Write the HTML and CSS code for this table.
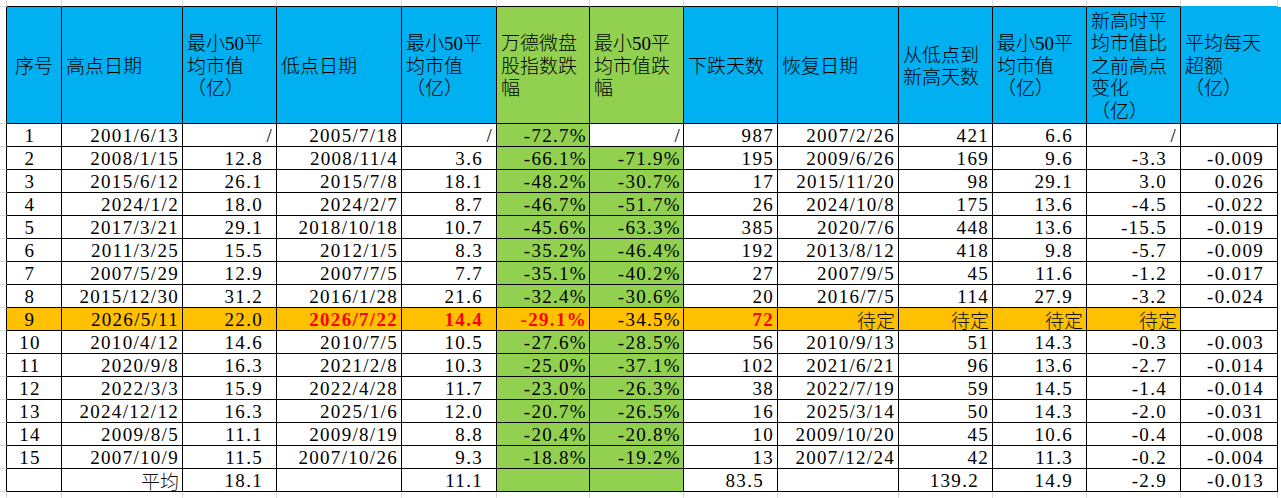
FILE: index.html
```html
<!DOCTYPE html>
<html lang="zh-CN">
<head>
<meta charset="utf-8">
<title>微盘股回撤统计</title>
<link rel="stylesheet" href="styles.css">
</head>
<body>
<div class="sheet">
  <!-- top gridline strip -->
  <div class="corner"></div>
  <div class="gt"></div><div class="gt"></div><div class="gt"></div><div class="gt"></div><div class="gt"></div><div class="gt"></div><div class="gt"></div><div class="gt"></div><div class="gt"></div><div class="gt"></div><div class="gt"></div><div class="gt"></div><div class="gt gt-open"></div>

  <!-- header -->
  <div class="gl"></div>
  <div class="h hc">序号</div>
  <div class="h">高点日期</div>
  <div class="h">最小50平均市值（亿）</div>
  <div class="h">低点日期</div>
  <div class="h">最小50平均市值（亿）</div>
  <div class="h hg">万德微盘股指数跌幅</div>
  <div class="h hg">最小50平均市值跌幅</div>
  <div class="h">下跌天数</div>
  <div class="h">恢复日期</div>
  <div class="h">从低点到新高天数</div>
  <div class="h">最小50平均市值（亿）</div>
  <div class="h">新高时平均市值比之前高点变化（亿）</div>
  <div class="h h-open">平均每天超额（亿）</div>
  <div class="hx"></div>

  <!-- row 1 -->
  <div class="gl"></div>
  <div class="c idx">1</div><div class="c">2001/6/13</div><div class="c">/</div><div class="c">2005/7/18</div><div class="c">/</div><div class="c pct gr">-72.7%</div><div class="c pct">/</div><div class="c">987</div><div class="c">2007/2/26</div><div class="c">421</div><div class="c dec">6.6</div><div class="c">/</div><div class="c"></div>
  <!-- row 2 -->
  <div class="gl"></div>
  <div class="c idx">2</div><div class="c">2008/1/15</div><div class="c dec">12.8</div><div class="c">2008/11/4</div><div class="c dec">3.6</div><div class="c pct gr">-66.1%</div><div class="c pct gr">-71.9%</div><div class="c">195</div><div class="c">2009/6/26</div><div class="c">169</div><div class="c dec">9.6</div><div class="c dec">-3.3</div><div class="c dec">-0.009</div>
  <!-- row 3 -->
  <div class="gl"></div>
  <div class="c idx">3</div><div class="c">2015/6/12</div><div class="c dec">26.1</div><div class="c">2015/7/8</div><div class="c dec">18.1</div><div class="c pct gr">-48.2%</div><div class="c pct gr">-30.7%</div><div class="c">17</div><div class="c">2015/11/20</div><div class="c">98</div><div class="c dec">29.1</div><div class="c dec">3.0</div><div class="c dec">0.026</div>
  <!-- row 4 -->
  <div class="gl"></div>
  <div class="c idx">4</div><div class="c">2024/1/2</div><div class="c dec">18.0</div><div class="c">2024/2/7</div><div class="c dec">8.7</div><div class="c pct gr">-46.7%</div><div class="c pct gr">-51.7%</div><div class="c">26</div><div class="c">2024/10/8</div><div class="c">175</div><div class="c dec">13.6</div><div class="c dec">-4.5</div><div class="c dec">-0.022</div>
  <!-- row 5 -->
  <div class="gl"></div>
  <div class="c idx">5</div><div class="c">2017/3/21</div><div class="c dec">29.1</div><div class="c">2018/10/18</div><div class="c dec">10.7</div><div class="c pct gr">-45.6%</div><div class="c pct gr">-63.3%</div><div class="c">385</div><div class="c">2020/7/6</div><div class="c">448</div><div class="c dec">13.6</div><div class="c dec">-15.5</div><div class="c dec">-0.019</div>
  <!-- row 6 -->
  <div class="gl"></div>
  <div class="c idx">6</div><div class="c">2011/3/25</div><div class="c dec">15.5</div><div class="c">2012/1/5</div><div class="c dec">8.3</div><div class="c pct gr">-35.2%</div><div class="c pct gr">-46.4%</div><div class="c">192</div><div class="c">2013/8/12</div><div class="c">418</div><div class="c dec">9.8</div><div class="c dec">-5.7</div><div class="c dec">-0.009</div>
  <!-- row 7 -->
  <div class="gl"></div>
  <div class="c idx">7</div><div class="c">2007/5/29</div><div class="c dec">12.9</div><div class="c">2007/7/5</div><div class="c dec">7.7</div><div class="c pct gr">-35.1%</div><div class="c pct gr">-40.2%</div><div class="c">27</div><div class="c">2007/9/5</div><div class="c">45</div><div class="c dec">11.6</div><div class="c dec">-1.2</div><div class="c dec">-0.017</div>
  <!-- row 8 -->
  <div class="gl"></div>
  <div class="c idx">8</div><div class="c">2015/12/30</div><div class="c dec">31.2</div><div class="c">2016/1/28</div><div class="c dec">21.6</div><div class="c pct gr">-32.4%</div><div class="c pct gr">-30.6%</div><div class="c">20</div><div class="c">2016/7/5</div><div class="c">114</div><div class="c dec">27.9</div><div class="c dec">-3.2</div><div class="c dec">-0.024</div>
  <!-- row 9 (current) -->
  <div class="gl"></div>
  <div class="c idx or">9</div><div class="c or">2026/5/11</div><div class="c dec or">22.0</div><div class="c or red">2026/7/22</div><div class="c dec or red">14.4</div><div class="c pct or red">-29.1%</div><div class="c pct or">-34.5%</div><div class="c or red">72</div><div class="c or"><span class="zh">待定</span></div><div class="c or"><span class="zh">待定</span></div><div class="c or"><span class="zh">待定</span></div><div class="c or"><span class="zh">待定</span></div><div class="c"></div>
  <!-- row 10 -->
  <div class="gl"></div>
  <div class="c idx">10</div><div class="c">2010/4/12</div><div class="c dec">14.6</div><div class="c">2010/7/5</div><div class="c dec">10.5</div><div class="c pct gr">-27.6%</div><div class="c pct gr">-28.5%</div><div class="c">56</div><div class="c">2010/9/13</div><div class="c">51</div><div class="c dec">14.3</div><div class="c dec">-0.3</div><div class="c dec">-0.003</div>
  <!-- row 11 -->
  <div class="gl"></div>
  <div class="c idx">11</div><div class="c">2020/9/8</div><div class="c dec">16.3</div><div class="c">2021/2/8</div><div class="c dec">10.3</div><div class="c pct gr">-25.0%</div><div class="c pct gr">-37.1%</div><div class="c">102</div><div class="c">2021/6/21</div><div class="c">96</div><div class="c dec">13.6</div><div class="c dec">-2.7</div><div class="c dec">-0.014</div>
  <!-- row 12 -->
  <div class="gl"></div>
  <div class="c idx">12</div><div class="c">2022/3/3</div><div class="c dec">15.9</div><div class="c">2022/4/28</div><div class="c dec">11.7</div><div class="c pct gr">-23.0%</div><div class="c pct gr">-26.3%</div><div class="c">38</div><div class="c">2022/7/19</div><div class="c">59</div><div class="c dec">14.5</div><div class="c dec">-1.4</div><div class="c dec">-0.014</div>
  <!-- row 13 -->
  <div class="gl"></div>
  <div class="c idx">13</div><div class="c">2024/12/12</div><div class="c dec">16.3</div><div class="c">2025/1/6</div><div class="c dec">12.0</div><div class="c pct gr">-20.7%</div><div class="c pct gr">-26.5%</div><div class="c">16</div><div class="c">2025/3/14</div><div class="c">50</div><div class="c dec">14.3</div><div class="c dec">-2.0</div><div class="c dec">-0.031</div>
  <!-- row 14 -->
  <div class="gl"></div>
  <div class="c idx">14</div><div class="c">2009/8/5</div><div class="c dec">11.1</div><div class="c">2009/8/19</div><div class="c dec">8.8</div><div class="c pct gr">-20.4%</div><div class="c pct gr">-20.8%</div><div class="c">10</div><div class="c">2009/10/20</div><div class="c">45</div><div class="c dec">10.6</div><div class="c dec">-0.4</div><div class="c dec">-0.008</div>
  <!-- row 15 -->
  <div class="gl"></div>
  <div class="c idx">15</div><div class="c">2007/10/9</div><div class="c dec">11.5</div><div class="c">2007/10/26</div><div class="c dec">9.3</div><div class="c pct gr">-18.8%</div><div class="c pct gr">-19.2%</div><div class="c">13</div><div class="c">2007/12/24</div><div class="c">42</div><div class="c dec">11.3</div><div class="c dec">-0.2</div><div class="c dec">-0.004</div>
  <!-- average row -->
  <div class="gl"></div>
  <div class="c idx"></div><div class="c"><span class="zh">平均</span></div><div class="c dec">18.1</div><div class="c"></div><div class="c dec">11.1</div><div class="c gr"></div><div class="c gr"></div><div class="c dec">83.5</div><div class="c"></div><div class="c dec">139.2</div><div class="c dec">14.9</div><div class="c dec">-2.9</div><div class="c dec">-0.013</div>

  <!-- bottom gridline strip -->
  <div class="gb gl-first"></div>
  <div class="gb"></div><div class="gb"></div><div class="gb"></div><div class="gb"></div><div class="gb"></div><div class="gb"></div><div class="gb"></div><div class="gb"></div><div class="gb"></div><div class="gb"></div><div class="gb"></div><div class="gb"></div><div class="gb"></div>
</div>
</body>
</html>
```

FILE: styles.css
```css
html, body {
  margin: 0;
  padding: 0;
  background: #ffffff;
  overflow: hidden;
}

.sheet {
  display: grid;
  grid-template-columns: 7px 55px 121px 94px 125px 95px 93px 94px 94px 121px 94px 94px 94px 97px 4px;
  grid-template-rows: 7px 117px repeat(16, 23px) 10px;
  width: max-content;
  font-family: "Liberation Serif", "Noto Sans CJK SC", serif;
  font-size: 19px;
  color: #000;
}

.sheet > div {
  box-sizing: border-box;
  min-width: 0;
}

/* faint spreadsheet gridlines outside the table */
.corner {
  grid-column: 1;
  border-right: 1px solid #dadada;
  border-bottom: 1px solid #dadada;
}
.gt {
  border-right: 1px solid #dadada;
  border-bottom: 1px solid #000;
}
.gt-open {
  border-bottom-color: #00b0f0;
}
.gl {
  grid-column: 1;
  border-right: 1px solid #000;
  border-bottom: 1px solid #dadada;
}
.gb {
  border-right: 1px solid #dadada;
}
.gl-first {
  grid-column: 1;
}

/* header cells */
.h {
  display: flex;
  flex-direction: column;
  justify-content: center;
  padding: 4px 2px 0 4px;
  background: #00b0f0;
  border-right: 1px solid #000;
  border-bottom: 1px solid #000;
  line-height: 22.5px;
  font-weight: 300;
  text-spacing-trim: space-all;
}
.hc {
  text-align: center;
  padding: 4px 0 0 0;
}
.hg {
  background: #92d050;
}
.h-open {
  border-right: none;
}
.hx {
  background: #00b0f0;
  border-bottom: 1px solid #000;
}

/* data cells */
.c {
  border-right: 1px solid #000;
  border-bottom: 1px solid #000;
  text-align: right;
  white-space: nowrap;
  line-height: 20px;
  padding: 2px 3px 0 0;
  letter-spacing: 1.3px;
  font-weight: 300;
}
.zh {
  display: inline-block;
  height: 20px;
  line-height: 20px;
  vertical-align: top;
  font-family: "Noto Sans CJK SC", sans-serif;
  font-weight: 300;
  letter-spacing: 0;
  color: #111;
}
.idx {
  text-align: center;
  padding-right: 8px;
}
.dec {
  padding-right: 13px;
}
.pct {
  padding-right: 2px;
}
.gr {
  background: #92d050;
}
.or {
  background: #ffc000;
}
.red {
  color: #ff0000;
  font-weight: bold;
}
```
